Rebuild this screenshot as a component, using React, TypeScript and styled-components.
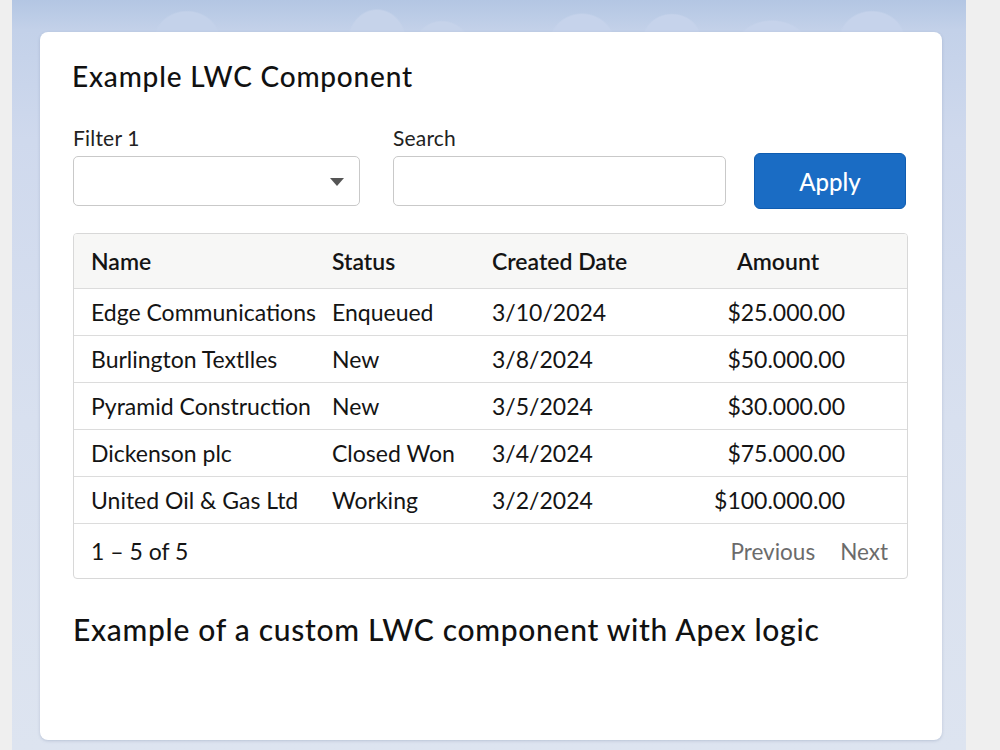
import React from "react";
import styled, { createGlobalStyle } from "styled-components";

const GlobalStyle = createGlobalStyle`
  html, body { margin: 0; padding: 0; }
  body {
    background: #eeeeee;
    font-family: Lato, "Open Sans", sans-serif;
    color: #111;
  }
`;

const Page = styled.div`
  display: flex;
  width: 1000px;
  height: 750px;
  overflow: hidden;
  background: #efefef;
`;

const Stage = styled.div`
  margin-left: 12px;
  width: 954px;
  height: 750px;
  box-sizing: border-box;
  padding: 32px 24px 10px 28px;
  background:
    radial-gradient(ellipse 45px 40px at 175px 40px, #c4d2ea 70%, transparent 74%),
    radial-gradient(ellipse 40px 45px at 365px 42px, #c6d3ea 70%, transparent 74%),
    radial-gradient(ellipse 40px 40px at 430px 50px, #c6d3ea 70%, transparent 74%),
    radial-gradient(ellipse 45px 42px at 570px 44px, #c6d3eb 70%, transparent 74%),
    radial-gradient(ellipse 40px 36px at 660px 40px, #c6d3eb 70%, transparent 74%),
    radial-gradient(ellipse 50px 38px at 760px 48px, #c6d3eb 70%, transparent 74%),
    radial-gradient(ellipse 45px 40px at 860px 40px, #c6d3eb 70%, transparent 74%),
    linear-gradient(180deg, #b3c6e3 0px, #c3d1e9 30px, #cfd9ed 140px, #d8e0ef 420px, #dde4f0 100%);
`;

const Card = styled.div`
  height: 708px;
  box-sizing: border-box;
  background: #ffffff;
  border-radius: 8px;
  box-shadow: 0 1px 3px rgba(80, 100, 140, 0.25);
  padding: 26px 34px 0 32px;
  display: flex;
  flex-direction: column;
`;

const Title = styled.h1`
  margin: 0;
  font-size: 28px;
  font-weight: 500;
  line-height: 36px;
  letter-spacing: 0.8px;
  color: #111;
`;

const FilterRow = styled.div`
  display: flex;
  align-items: center;
  margin: 31px 0 0 1px;
`;

const Field = styled.div<{ $w: number; $gap: number }>`
  display: flex;
  flex-direction: column;
  width: ${(p) => p.$w}px;
  margin-right: ${(p) => p.$gap}px;
`;

const Label = styled.label`
  font-size: 21px;
  line-height: 26px;
  letter-spacing: 0.2px;
  color: #222;
  margin-bottom: 5px;
`;

const Box = styled.div`
  position: relative;
  height: 50px;
  box-sizing: border-box;
  border: 1px solid #c9c9c9;
  border-radius: 5px;
  background: #fff;
`;

const Caret = styled.span`
  position: absolute;
  right: 15px;
  top: 21px;
  width: 0;
  height: 0;
  border-left: 7px solid transparent;
  border-right: 7px solid transparent;
  border-top: 8px solid #555;
`;

const ApplyButton = styled.button`
  align-self: flex-end;
  margin-bottom: -3px;
  width: 152px;
  height: 56px;
  border: 1px solid #0f5cb0;
  border-radius: 6px;
  background: #1a6cc4;
  color: #fff;
  font-family: Lato, "Open Sans", sans-serif;
  font-size: 24px;
  font-weight: 500;
`;

const Table = styled.div`
  box-sizing: border-box;
  margin-top: 27px;
  margin-left: 1px;
  width: 835px;
  border: 1px solid #d8d8d8;
  border-radius: 4px;
  overflow: hidden;
`;

const Row = styled.div<{ $head?: boolean; $h: number }>`
  box-sizing: border-box;
  display: grid;
  grid-template-columns: 241px 160px 226px 1fr;
  align-items: center;
  height: ${(p) => p.$h}px;
  background: ${(p) => (p.$head ? "#f7f7f6" : "#fff")};
  border-bottom: 1px solid #dcdcdc;
  font-size: 23px;
  font-weight: ${(p) => (p.$head ? 600 : 400)};
  color: #141414;
`;

const Cell = styled.div<{ $pl?: number; $right?: boolean }>`
  padding-left: ${(p) => (p.$right ? 0 : p.$pl ?? 17)}px;
  padding-right: ${(p) => (p.$right ? 62 : 0)}px;
  text-align: ${(p) => (p.$right ? "right" : "left")};
  white-space: nowrap;
`;

const Footer = styled.div`
  display: flex;
  align-items: center;
  justify-content: space-between;
  height: 54px;
  padding: 0 19px 0 17px;
  font-size: 23px;
  color: #141414;
`;

const Pager = styled.div`
  display: flex;
  gap: 25px;
  color: #6b6b6b;
  font-size: 22.5px;
`;

const Caption = styled.h2`
  margin: 32px 0 0 1px;
  font-size: 30px;
  font-weight: 500;
  line-height: 36px;
  color: #111;
  letter-spacing: 0.7px;
`;

const rows = [
  ["Edge Communications", "Enqueued", "3/10/2024", "$25.000.00"],
  ["Burlington Textlles", "New", "3/8/2024", "$50.000.00"],
  ["Pyramid Construction", "New", "3/5/2024", "$30.000.00"],
  ["Dickenson plc", "Closed Won", "3/4/2024", "$75.000.00"],
  ["United Oil & Gas Ltd", "Working", "3/2/2024", "$100.000.00"],
];

export default function App() {
  return (
    <>
      <GlobalStyle />
      <Page>
        <Stage>
          <Card>
            <Title>Example LWC Component</Title>
            <FilterRow>
              <Field $w={287} $gap={33}>
                <Label>Filter 1</Label>
                <Box>
                  <Caret />
                </Box>
              </Field>
              <Field $w={333} $gap={28}>
                <Label>Search</Label>
                <Box />
              </Field>
              <ApplyButton>Apply</ApplyButton>
            </FilterRow>
            <Table>
              <Row $head $h={55}>
                <Cell>Name</Cell>
                <Cell>Status</Cell>
                <Cell>Created Date</Cell>
                <Cell $pl={36}>Amount</Cell>
              </Row>
              {rows.map((r) => (
                <Row key={r[0]} $h={47}>
                  <Cell>{r[0]}</Cell>
                  <Cell>{r[1]}</Cell>
                  <Cell>{r[2]}</Cell>
                  <Cell $right>{r[3]}</Cell>
                </Row>
              ))}
              <Footer>
                <span>1 – 5 of 5</span>
                <Pager>
                  <span>Previous</span>
                  <span>Next</span>
                </Pager>
              </Footer>
            </Table>
            <Caption>Example of a custom LWC component with Apex logic</Caption>
          </Card>
        </Stage>
      </Page>
    </>
  );
}
